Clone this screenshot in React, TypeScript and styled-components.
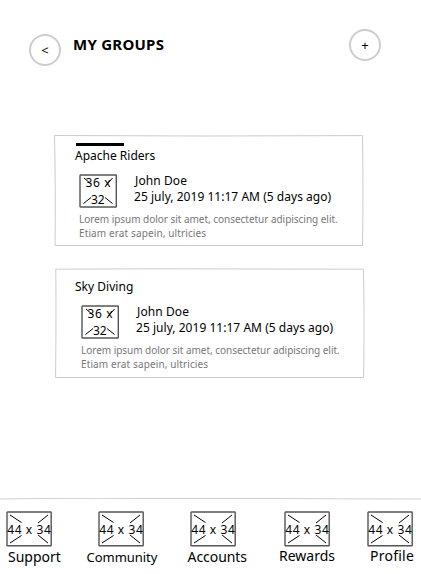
import React from 'react';
import styled, { createGlobalStyle } from 'styled-components';

const Global = createGlobalStyle`
  * { box-sizing: border-box; }
  body { margin: 0; background: #fff; color: #000; font-family: "Noto Sans", sans-serif; overflow: hidden; }
`;

const Screen = styled.div`
  width: 421px;
  height: 574px;
  display: flex;
  flex-direction: column;
  overflow: hidden;
  background: #fff;
`;

const Header = styled.header`
  height: 135px;
  padding: 29px 40px 0 29px;
  display: flex;
  align-items: flex-start;
`;

const RoundButton = styled.button<{ $drop?: number }>`
  width: 32px;
  height: 32px;
  margin: ${(p) => p.$drop ?? 0}px 0 0;
  padding: 0 0 1px;
  display: flex;
  align-items: center;
  justify-content: center;
  border: 2px solid #cdcdcd;
  border-radius: 50%;
  background: #fff;
  color: #000;
  font: 13px "Noto Sans", sans-serif;
`;

const Title = styled.h1`
  flex: 1;
  margin: 5px 0 0 12px;
  font-size: 15px;
  line-height: 20px;
  font-weight: 700;
  letter-spacing: 0.25px;
  white-space: nowrap;
`;

const Groups = styled.main`
  flex: 1;
  display: flex;
  flex-direction: column;
  align-items: flex-start;
  gap: 22px;
`;

const Card = styled.article<{ $left: number; $top: number }>`
  position: relative;
  width: 310px;
  height: 111px;
  margin-left: ${(p) => p.$left}px;
  padding-top: ${(p) => p.$top}px;
`;

const Frame = styled.svg`
  position: absolute;
  inset: 0;
  fill: none;
  stroke: #cbcbcb;
`;

const ActiveMark = styled.span`
  position: absolute;
  top: 8px;
  left: 22px;
  width: 48px;
  height: 3px;
  background: #000;
`;

const CardTitle = styled.h2<{ $left: number; $spacing: number }>`
  margin: 0 0 8px ${(p) => p.$left}px;
  font-size: 12px;
  line-height: 16px;
  font-weight: 400;
  letter-spacing: ${(p) => p.$spacing}px;
`;

const Author = styled.div<{ $left: number }>`
  height: 40px;
  margin-left: ${(p) => p.$left}px;
  padding-top: 2px;
  display: flex;
  gap: 17px;
`;

const Meta = styled.div`
  margin-top: -1px;
  font-size: 12px;
  line-height: 16px;
  letter-spacing: 0.03px;
  white-space: nowrap;
`;

const Name = styled.div`
  padding-left: 1px;
  letter-spacing: 0.1px;
`;

const Excerpt = styled.div<{ $left: number }>`
  margin-left: ${(p) => p.$left}px;
  color: #777;
  font-size: 10px;
  line-height: 14px;
  white-space: nowrap;
`;

const ExcerptLine = styled.div<{ $spacing: number }>`
  letter-spacing: ${(p) => p.$spacing}px;
`;

const Sketch = styled.svg`
  display: block;
  flex: none;
  fill: none;
  stroke: #000;
  overflow: visible;

  rect { stroke: #555; stroke-width: 1.4; }
  text { fill: #000; stroke: none; font: 12px "Noto Sans", sans-serif; }
`;

const Nav = styled.nav`
  height: 76px;
`;

const NavRule = styled.svg`
  display: block;
  fill: none;
  stroke: #cfcfcf;
`;

const NavItems = styled.div`
  display: flex;
  padding: 11px 0 0 6px;
`;

const NavItem = styled.div<{ $width: number }>`
  flex: none;
  width: ${(p) => p.$width}px;
`;

const NavLabel = styled.div<{ $shift: number; $lift: number; $size: number; $spacing: number }>`
  margin: ${(p) => 1 - p.$lift}px 0 0 ${(p) => p.$shift}px;
  font-size: ${(p) => p.$size}px;
  line-height: 18px;
  letter-spacing: ${(p) => p.$spacing}px;
  white-space: nowrap;
`;

const Avatar = () => (
  <Sketch width="38" height="34">
    <rect x="1" y="1" width="36.3" height="32" rx="0.5" />
    <path d="M5 4L12 10M33.5 4L27.5 11M4.5 29.5L12 23.5M33.5 29.5L26 23.5" />
    <text x="6.5" y="13" textLength="25">36 x</text>
    <text x="12" y="30">32</text>
  </Sketch>
);

const NavPicture = () => (
  <Sketch width="46" height="36">
    <rect x="1" y="1" width="44.2" height="33.8" rx="0.5" />
    <path d="M4 4L15.5 11.5M42 4L32 12M4 32L15.5 24.5M42 32L32 24" />
    <text x="1.3" y="23.3" textLength="43.5">44 x 34</text>
  </Sketch>
);

const groups = [
  {
    name: 'Apache Riders', left: 54, top: 13, titleLeft: 21, bodyLeft: 25, spacing: 0, active: true,
    frame: 'M0.5 0.5L150 1L308.5 0.6Q309.4 60 308.5 110.5L1 110.5Q1.8 60 0.5 0.5Z',
  },
  {
    name: 'Sky Diving', left: 55, top: 11, titleLeft: 20, bodyLeft: 26, spacing: 0.02, active: false,
    frame: 'M0.8 1.2L100 0.8L308.3 1.2Q309.6 40 308.6 109.5L0.6 109.5Q1.2 50 0.8 1.2Z',
  },
];

const navItems = [
  { label: 'Support', width: 92, shift: 2, lift: 0, size: 14, spacing: 0 },
  { label: 'Community', width: 92, shift: -11.5, lift: 0, size: 13, spacing: -0.03 },
  { label: 'Accounts', width: 94, shift: -2.5, lift: 0, size: 14, spacing: -0.05 },
  { label: 'Rewards', width: 83, shift: -5, lift: 1, size: 14, spacing: 0 },
  { label: 'Profile', width: 60, shift: 3, lift: 1, size: 14, spacing: 0.25 },
];

export default function App() {
  return (
    <Screen>
      <Global />
      <Header>
        <RoundButton $drop={5} aria-label="Back">&lt;</RoundButton>
        <Title>MY GROUPS</Title>
        <RoundButton aria-label="Add group">+</RoundButton>
      </Header>
      <Groups>
        {groups.map((g) => (
          <Card key={g.name} $left={g.left} $top={g.top}>
            <Frame width="310" height="111"><path d={g.frame} /></Frame>
            {g.active && <ActiveMark />}
            <CardTitle $left={g.titleLeft} $spacing={g.spacing}>{g.name}</CardTitle>
            <Author $left={g.bodyLeft}>
              <Avatar />
              <Meta>
                <Name>John Doe</Name>
                <div>25 july, 2019 11:17 AM (5 days ago)</div>
              </Meta>
            </Author>
            <Excerpt $left={g.bodyLeft}>
              <ExcerptLine $spacing={-0.03}>Lorem ipsum dolor sit amet, consectetur adipiscing elit.</ExcerptLine>
              <ExcerptLine $spacing={0.12}>Etiam erat sapein, ultricies</ExcerptLine>
            </Excerpt>
          </Card>
        ))}
      </Groups>
      <Nav>
        <NavRule width="421" height="2"><path d="M0 1Q60 0 140 0.5L280 0.5Q350 1 421 1" /></NavRule>
        <NavItems>
          {navItems.map((n) => (
            <NavItem key={n.label} $width={n.width}>
              <NavPicture />
              <NavLabel $shift={n.shift} $lift={n.lift} $size={n.size} $spacing={n.spacing}>{n.label}</NavLabel>
            </NavItem>
          ))}
        </NavItems>
      </Nav>
    </Screen>
  );
}
